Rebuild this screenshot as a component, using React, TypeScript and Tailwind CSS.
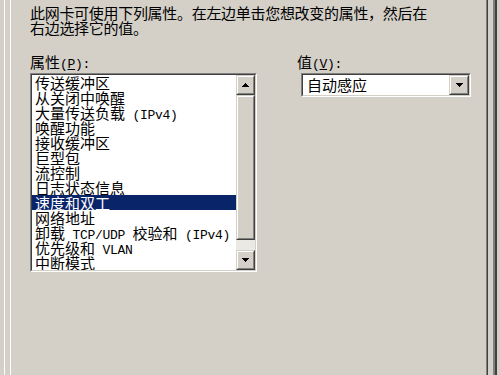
import React from "react";

type Seg = string | { m: string };

const items: Seg[][] = [
  ["传送缓冲区"],
  ["从关闭中唤醒"],
  ["大量传送负载", { m: " (IPv4)" }],
  ["唤醒功能"],
  ["接收缓冲区"],
  ["巨型包"],
  ["流控制"],
  ["日志状态信息"],
  ["速度和双工"],
  ["网络地址"],
  ["卸载", { m: " TCP/UDP " }, "校验和", { m: " (IPv4)" }],
  ["优先级和", { m: " VLAN" }],
  ["中断模式"],
];

const SELECTED = 8;

function Raised({ className, children }: { className?: string; children?: React.ReactNode }) {
  return (
    <div
      className={
        "border border-t-[#d4d0c8] border-l-[#d4d0c8] border-r-[#404040] border-b-[#404040] " +
        (className ?? "")
      }
    >
      <div className="w-full h-full border border-t-white border-l-white border-r-[#808080] border-b-[#808080] bg-[#d4d0c8] flex items-center justify-center">
        {children}
      </div>
    </div>
  );
}

function Sunken({ className, children }: { className?: string; children?: React.ReactNode }) {
  return (
    <div
      className={
        "border border-t-[#808080] border-l-[#808080] border-r-white border-b-white " + (className ?? "")
      }
    >
      <div className="w-full h-full border border-t-[#404040] border-l-[#404040] border-r-[#d4d0c8] border-b-[#d4d0c8] bg-white flex">
        {children}
      </div>
    </div>
  );
}

function UpArrow() {
  return (
    <svg width="7" height="4" viewBox="0 0 7 4" shapeRendering="crispEdges">
      <rect x="3" y="0" width="1" height="1" fill="#000" />
      <rect x="2" y="1" width="3" height="1" fill="#000" />
      <rect x="1" y="2" width="5" height="1" fill="#000" />
      <rect x="0" y="3" width="7" height="1" fill="#000" />
    </svg>
  );
}

function DownArrow() {
  return (
    <svg width="7" height="4" viewBox="0 0 7 4" shapeRendering="crispEdges">
      <rect x="0" y="0" width="7" height="1" fill="#000" />
      <rect x="1" y="1" width="5" height="1" fill="#000" />
      <rect x="2" y="2" width="3" height="1" fill="#000" />
      <rect x="3" y="3" width="1" height="1" fill="#000" />
    </svg>
  );
}

const mono = "font-['Liberation_Mono','Noto_Sans_CJK_SC',monospace] text-[13px] tracking-[-0.3px]";

export default function App() {
  return (
    <div className="w-[500px] h-[375px] bg-[#d4d0c8] overflow-hidden flex pl-[4px] pr-[3px] text-black font-['Noto_Sans_CJK_SC',sans-serif] text-[15px] leading-[15px]">
      <div className="flex-1 flex border-l border-l-white border-r-2 border-r-[#404040]">
        <div className="flex-1 flex border-r-2 border-r-[#808080] pl-[5px]">
          <div className="w-[478px] h-full flex border-l border-l-white border-r border-r-[#404040]">
            <div className="flex-1 h-full border-r border-r-[#808080] pl-[19px] pt-[5px]">
              <p className="tracking-[-0.3px] whitespace-nowrap">
                此网卡可使用下列属性。在左边单击您想改变的属性，然后在
                <br />
                右边选择它的值。
              </p>
              <div className="flex mt-[19px]">
                <div className="w-[227px] flex flex-col">
                  <div className="h-[15px] whitespace-pre">
                    属性<span className={mono}>(<span className="underline">P</span>):</span>
                  </div>
                  <Sunken className="mt-[4px] h-[199px] w-[227px]">
                    <div className="flex-1 flex flex-col overflow-hidden">
                      {items.map((segs, i) => (
                        <div
                          key={i}
                          className={
                            "h-[15px] shrink-0 pl-[3px] whitespace-pre " +
                            (i === SELECTED ? "bg-[#0a246a] text-white" : "")
                          }
                        >
                          {segs.map((s, j) =>
                            typeof s === "string" ? (
                              <span key={j}>{s}</span>
                            ) : (
                              <span key={j} className={mono}>
                                {s.m}
                              </span>
                            )
                          )}
                        </div>
                      ))}
                    </div>
                    <div className="w-[19px] flex flex-col shrink-0">
                      <Raised className="h-[20px] w-[19px]">
                        <UpArrow />
                      </Raised>
                      <Raised className="h-[145px] w-[19px]" />
                      <div className="h-[10px] bg-[#ebe9e4]" />
                      <Raised className="h-[20px] w-[19px]">
                        <DownArrow />
                      </Raised>
                    </div>
                  </Sunken>
                </div>
                <div className="ml-[40px] flex flex-col">
                  <div className="h-[15px] whitespace-pre">
                    值<span className={mono}>(<span className="underline">V</span>):</span>
                  </div>
                  <Sunken className="mt-[4px] ml-[4px] h-[24px] w-[170px]">
                    <div className="flex-1 pl-[4px] leading-[20px]">自动感应</div>
                    <Raised className="h-[20px] w-[20px]">
                      <DownArrow />
                    </Raised>
                  </Sunken>
                </div>
              </div>
            </div>
          </div>
        </div>
      </div>
    </div>
  );
}
